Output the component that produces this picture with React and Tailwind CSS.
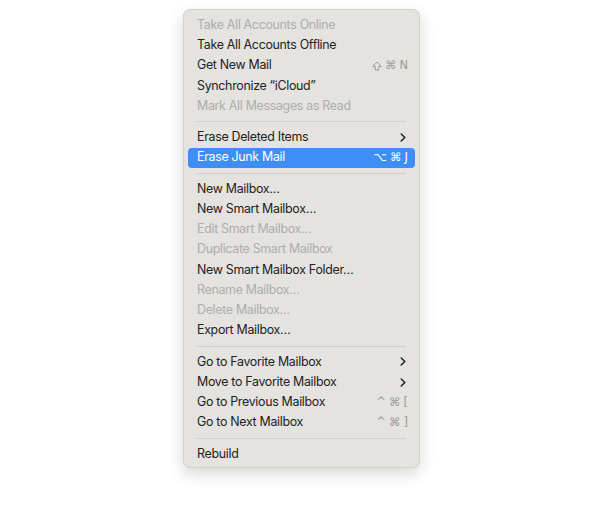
import React from 'react';

const ShiftIcon = () => (
  <svg viewBox="0 0 10 10" className="w-[10px] h-[10px]" fill="none" stroke="currentColor" strokeWidth="1" strokeLinejoin="round">
    <path d="M5 1 L9.2 5.4 L6.8 5.4 L6.8 9 L3.2 9 L3.2 5.4 L0.8 5.4 Z" />
  </svg>
);

// menu rows: type item | sep
const items = [
  { label: 'Take All Accounts Online', disabled: true },
  { label: 'Take All Accounts Offline' },
  { label: 'Get New Mail', keys: [<ShiftIcon />, '⌘', 'N'] },
  { label: 'Synchronize “iCloud”' },
  { label: 'Mark All Messages as Read', disabled: true },
  { sep: true },
  { label: 'Erase Deleted Items', submenu: true },
  { label: 'Erase Junk Mail', keys: ['⌥', '⌘', 'J'], active: true },
  { sep: true },
  { label: 'New Mailbox…' },
  { label: 'New Smart Mailbox…' },
  { label: 'Edit Smart Mailbox…', disabled: true },
  { label: 'Duplicate Smart Mailbox', disabled: true },
  { label: 'New Smart Mailbox Folder…' },
  { label: 'Rename Mailbox…', disabled: true },
  { label: 'Delete Mailbox…', disabled: true },
  { label: 'Export Mailbox…' },
  { sep: true },
  { label: 'Go to Favorite Mailbox', submenu: true },
  { label: 'Move to Favorite Mailbox', submenu: true },
  { label: 'Go to Previous Mailbox', keys: ['^', '⌘', '['] },
  { label: 'Go to Next Mailbox', keys: ['^', '⌘', ']'] },
  { sep: true },
  { label: 'Rebuild' },
];

const Chevron = ({ className }) => (
  <svg viewBox="0 0 6 9" className={className} fill="none" stroke="currentColor" strokeWidth="1.5" strokeLinecap="round" strokeLinejoin="round">
    <path d="M1.2 1 L4.8 4.5 L1.2 8" />
  </svg>
);

const MenuRow = ({ item }) => {
  if (item.sep) {
    return (
      <div className="h-[11px] flex items-center px-[13px]">
        <div className="h-px w-full bg-[#cfcecb]" />
      </div>
    );
  }

  const textColor = item.active
    ? 'text-white'
    : item.disabled
    ? 'text-[#aeadaa]'
    : 'text-[#222221]';

  return (
    <div className="px-[4px]">
      <div
        className={`h-[20.25px] flex items-center justify-between pl-[9px] pr-[7px] rounded-[4px] ${
          item.active ? 'bg-[#3e8ef5]' : ''
        } ${textColor}`}
      >
        <span>{item.label}</span>
        {item.keys && (
          <span
            className={`flex items-center gap-[3px] font-['DejaVu_Sans',sans-serif] text-[11.5px] tracking-normal ${
              item.active ? 'text-white' : 'text-[#9c9b98]'
            }`}
          >
            {item.keys.map((k, i) => (
              <span key={i} className="flex items-center">{k}</span>
            ))}
          </span>
        )}
        {item.submenu && <Chevron className="w-[6px] h-[9px] mr-[2px] text-[#222221]" />}
      </div>
    </div>
  );
};

export default function App() {
  return (
    <div className="w-[608px] h-[509px] bg-white relative font-['Inter',sans-serif] text-[12.4px] tracking-[-0.3px]">
      <div className="absolute left-[183px] top-[9px] w-[237px] pt-[5px] pb-[3px] bg-[#e4e3e0] border border-[#d3d2cf] rounded-[7px] shadow-[0_6px_16px_rgba(0,0,0,0.16)]">
        {items.map((item, i) => (
          <MenuRow key={i} item={item} />
        ))}
      </div>
    </div>
  );
}
